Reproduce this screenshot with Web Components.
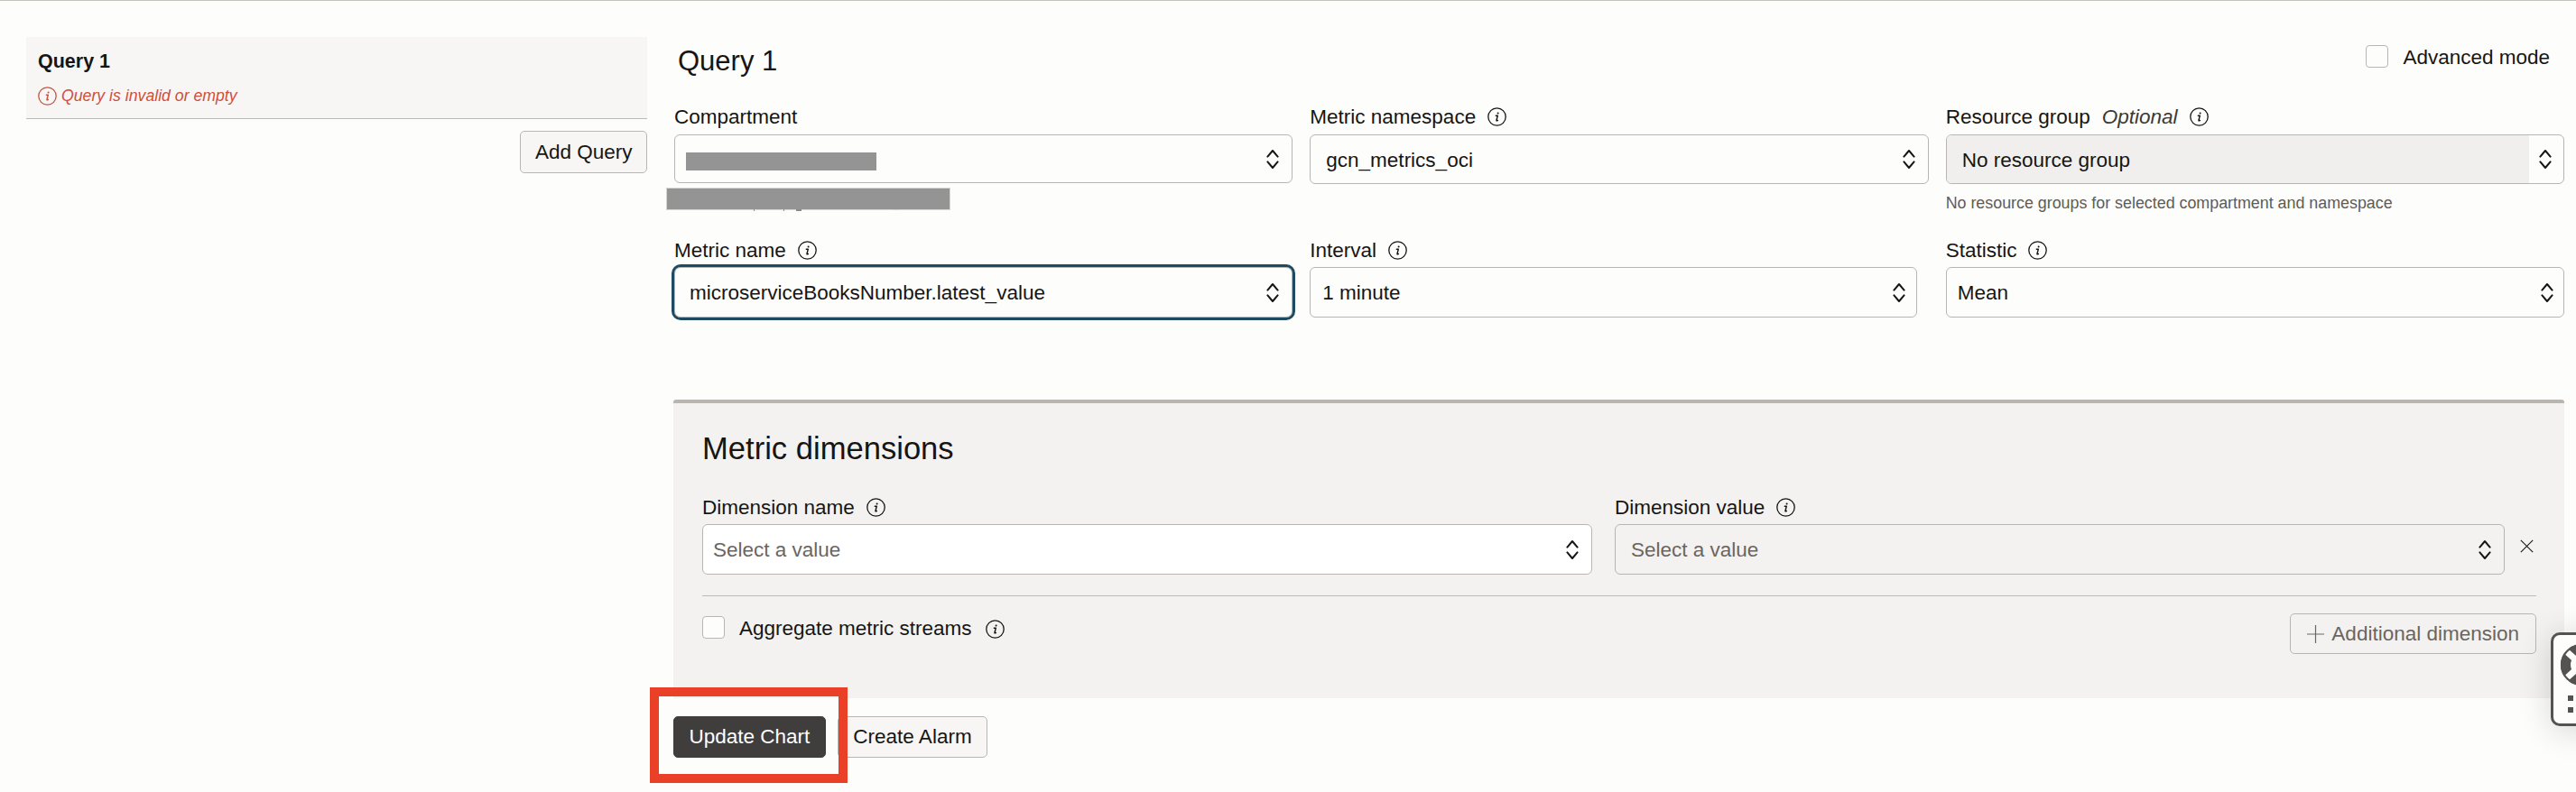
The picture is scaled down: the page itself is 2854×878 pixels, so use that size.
<!DOCTYPE html>
<html lang="en">
<head>
<meta charset="utf-8">
<title>Query 1</title>
<style>
  html, body { margin: 0; padding: 0; overflow: hidden; }
  body { background: #fdfdfb; color: #161513; font-family: "Liberation Sans", Arial, sans-serif; font-size: 22.5px; }
</style>
</head>
<body>
<oci-page>
  <query-sidebar slot="side"></query-sidebar>
  <query-editor slot="main"></query-editor>
</oci-page>

<script>
const INFO_ICON = `
  <svg width="21" height="21" viewBox="0 0 21 21" fill="none" stroke="currentColor" aria-hidden="true">
    <circle cx="10.5" cy="10.5" r="9.7" stroke-width="1.3"/>
    <path d="M9.3 9.3h2l-1.3 4.9c-.2.8.4 1 1.4.2" stroke-width="1.4" stroke-linecap="round" stroke-linejoin="round"/>
    <circle cx="11.6" cy="6.4" r="1" fill="currentColor" stroke="none"/>
  </svg>`;

class InfoIcon extends HTMLElement {
  connectedCallback() {
    this.attachShadow({ mode: 'open' });
    this.shadowRoot.innerHTML = `
      <style>
        :host { display: inline-flex; flex: none; width: 21px; height: 21px; }
      </style>
      ${INFO_ICON}
    `;
  }
}

class OciButton extends HTMLElement {
  connectedCallback() {
    this.attachShadow({ mode: 'open' });
    this.shadowRoot.innerHTML = `
      <style>
        :host {
          display: inline-flex;
          align-items: center;
          box-sizing: border-box;
          height: 47px;
          padding: 0 var(--btn-pad, 15.5px);
          border: 1px solid #b9b6b1;
          border-radius: 5px;
          background: #f7f6f5;
          color: #161513;
          white-space: nowrap;
        }
        :host([primary]) { background: #3f3e3c; border-color: #3f3e3c; color: #fff; }
        :host([disabled]) { background: transparent; color: #6b6560; padding: 0 18px; height: 45px; }
      </style>
      <slot></slot>
    `;
  }
}

class OciCheckbox extends HTMLElement {
  connectedCallback() {
    this.attachShadow({ mode: 'open' });
    this.shadowRoot.innerHTML = `
      <style>
        :host { display: inline-flex; align-items: flex-start; gap: 16px; line-height: 24px; white-space: nowrap; }
        .box {
          flex: none;
          box-sizing: border-box;
          width: 25px;
          height: 25px;
          border: 1px solid #b9b6b1;
          border-radius: 4px;
          background: #fdfdfb;
        }
        .tail { display: inline-flex; align-items: center; box-sizing: border-box; height: 26px; padding-top: 2px; gap: 15px; }
      </style>
      <span class="box"></span>
      <span class="tail"><slot></slot></span>
    `;
  }
}

class OciSelect extends HTMLElement {
  connectedCallback() {
    this.attachShadow({ mode: 'open' });
    this.shadowRoot.innerHTML = `
      <style>
        :host {
          display: flex;
          box-sizing: border-box;
          height: var(--h, 56px);
          border: 1px solid #b9b6b1;
          border-radius: 6px;
          background: var(--bg, #fdfdfb);
          overflow: visible;
        }
        :host([focused]) { outline: 3.5px solid #1e4a62; outline-offset: 0; border-radius: 7px; }
        .value {
          flex: 1;
          display: flex;
          align-items: center;
          box-sizing: border-box;
          padding: 2px 0 0 var(--pad, 16px);
          background: var(--value-bg, transparent);
          border-radius: 5px 0 0 5px;
          white-space: nowrap;
          color: var(--text, #161513);
        }
        .caret {
          flex: none;
          display: flex;
          align-items: center;
          justify-content: flex-end;
          width: var(--caret-w, 38px);
          padding-right: var(--caret, 14px);
          box-sizing: border-box;
        }
      </style>
      <span class="value"><slot></slot></span>
      <span class="caret">
        <svg width="14" height="23" viewBox="0 0 14 23" fill="none" stroke="#161513" stroke-width="2" stroke-linecap="round" stroke-linejoin="round">
          <path d="M1.4 8.6 7 2l5.6 6.6"/>
          <path d="M1.4 14.4 7 21l5.6-6.6"/>
        </svg>
      </span>
    `;
  }
}

class OciField extends HTMLElement {
  connectedCallback() {
    const info = this.hasAttribute('info') ? '<info-icon></info-icon>' : '';
    const optional = this.hasAttribute('optional') ? '<em>Optional</em>' : '';
    this.attachShadow({ mode: 'open' });
    this.shadowRoot.innerHTML = `
      <style>
        :host { display: block; min-width: 0; position: relative; }
        .label {
          display: flex;
          align-items: center;
          gap: 13px;
          height: 26px;
          margin-bottom: var(--label-gap, 7px);
          white-space: nowrap;
        }
        .label span, em { padding-top: 2px; line-height: 24px; }
        em { font-style: italic; color: #3a3936; }
        ::slotted([slot=help]) { display: block; margin-top: 10px; font-size: 17.85px; line-height: 22px; color: #5f5b57; }
      </style>
      <div class="label"><span>${this.getAttribute('label')}</span>${optional}${info}</div>
      <slot></slot>
      <slot name="help"></slot>
    `;
  }
}

class RedactionBar extends HTMLElement {
  connectedCallback() {
    this.attachShadow({ mode: 'open' });
    this.shadowRoot.innerHTML = `
      <style>
        :host { display: block; width: 211px; height: 20px; margin-top: 4px; background: #949494; }
        :host([over]) {
          position: absolute;
          left: -7px;
          top: 93px;
          width: 313px;
          height: 23px;
          margin-top: 0;
          box-shadow: 0 0 0 1px #d6d6d4;
        }
        svg { display: none; position: absolute; left: 0; top: 23px; }
        :host([over]) svg { display: block; }
      </style>
      <svg width="313" height="3" viewBox="0 0 313 3" fill="#8a8a88">
        <rect x="96" y="0" width="1" height="2"/>
        <rect x="129" y="0" width="1" height="2"/>
        <rect x="143" y="0" width="6" height="2"/>
        <rect x="250" y="0" width="8" height="1" fill="#cfcfcd"/>
      </svg>
    `;
  }
}

class QuerySidebar extends HTMLElement {
  connectedCallback() {
    this.attachShadow({ mode: 'open' });
    this.shadowRoot.innerHTML = `
      <style>
        :host { display: block; padding-top: 40px; }
        .item {
          box-sizing: border-box;
          height: 91px;
          padding: 14px 13px 0;
          background: #f7f6f5;
          border-bottom: 1px solid #bdbab5;
        }
        .name { font-weight: 700; font-size: 21.5px; line-height: 26px; }
        .error {
          display: flex;
          align-items: center;
          gap: 5px;
          margin-top: 14px;
          height: 22px;
          font-size: 17.7px;
          font-style: italic;
          color: #cf4f3b;
          white-space: nowrap;
        }
        .actions { display: flex; justify-content: flex-end; margin-top: 13px; }
      </style>
      <div class="item">
        <div class="name">Query 1</div>
        <div class="error"><info-icon></info-icon><span>Query is invalid or empty</span></div>
      </div>
      <div class="actions"><oci-button>Add Query</oci-button></div>
    `;
  }
}

class DimensionPanel extends HTMLElement {
  connectedCallback() {
    this.attachShadow({ mode: 'open' });
    this.shadowRoot.innerHTML = `
      <style>
        :host {
          display: block;
          --label-gap: 6px;
          box-sizing: border-box;
          padding: 30px 31px 49px 32px;
          background: #f3f2f1;
          border-top: 4px solid #b9b6af;
          border-radius: 3px 3px 0 0;
        }
        h3 { margin: 0 0 32px; font-weight: 400; font-size: 34.6px; line-height: 40px; }
        .row { display: flex; gap: 25px; }
        .row oci-field { flex: 1; }
        .remove { flex: none; width: 35px; margin-left: -25px; padding: 49px 0 0 17px; box-sizing: border-box; }
        .remove svg { display: block; }
        hr { margin: 23px 0 19px; border: 0; border-top: 1px solid #bdbab5; }
        .foot { display: flex; justify-content: space-between; align-items: flex-start; }
        .foot oci-checkbox { margin-top: 3px; }
        .plus { display: inline-flex; align-items: center; gap: 8px; }
      </style>
      <h3>Metric dimensions</h3>
      <div class="row">
        <oci-field label="Dimension name" info>
          <oci-select style="--bg:#fff;--pad:11px;--text:#6b6560;--caret:14px">Select a value</oci-select>
        </oci-field>
        <oci-field label="Dimension value" info>
          <oci-select style="--bg:transparent;--pad:17px;--text:#6b6560;--caret:14px">Select a value</oci-select>
        </oci-field>
        <div class="remove">
          <svg width="15" height="15" viewBox="0 0 15 15" fill="none" stroke="#161513" stroke-width="1.1"><path d="M.8.8l13.4 13.4M14.2.8.8 14.2"/></svg>
        </div>
      </div>
      <hr>
      <div class="foot">
        <oci-checkbox>Aggregate metric streams <info-icon></info-icon></oci-checkbox>
        <oci-button disabled>
          <span class="plus">
            <svg width="19" height="20" viewBox="0 0 19 20" fill="none" stroke="#6b6560" stroke-width="1.2"><path d="M9.5 0v20M0 10h19"/></svg>
            <span>Additional dimension</span>
          </span>
        </oci-button>
      </div>
    `;
  }
}

class QueryEditor extends HTMLElement {
  connectedCallback() {
    this.attachShadow({ mode: 'open' });
    this.shadowRoot.innerHTML = `
      <style>
        :host { display: block; padding-top: 49px; }
        .top { display: flex; justify-content: space-between; align-items: flex-start; padding: 0 16px 0 5px; }
        h2 { margin: 0; font-weight: 400; font-size: 31px; line-height: 36px; }
        .grid {
          display: grid;
          grid-template-columns: repeat(3, 1fr);
          column-gap: 19px;
          row-gap: 28px;
          margin-top: 30px;
          padding-left: 1px;
          position: relative;
        }
        .second { --label-gap: 6px; }
        dimension-panel { margin-top: 91px; }
        .actions { display: flex; gap: 13px; margin-top: 20px; --btn-pad: 16.5px; }
        .actions oci-button { height: 46px; }
      </style>
      <div class="top">
        <h2>Query 1</h2>
        <oci-checkbox>Advanced mode</oci-checkbox>
      </div>
      <div class="grid">
        <oci-field label="Compartment">
          <oci-select style="--pad:12px;--h:54px;--caret:14px"><redaction-bar></redaction-bar></oci-select>
        </oci-field>
        <oci-field label="Metric namespace" info>
          <oci-select style="--pad:17px;--h:55px;--caret:14px">gcn_metrics_oci</oci-select>
        </oci-field>
        <oci-field label="Resource group" optional info>
          <oci-select style="--pad:17px;--h:55px;--caret:13px;--value-bg:#f0efee">No resource group</oci-select>
          <span slot="help">No resource groups for selected compartment and namespace</span>
        </oci-field>

        <oci-field class="second" label="Metric name" info>
          <oci-select focused style="--pad:16px;--caret:14px">microserviceBooksNumber.latest_value</oci-select>
        </oci-field>
        <oci-field class="second" label="Interval" info style="margin-right:13px">
          <oci-select style="--pad:13px;--caret:12px">1 minute</oci-select>
        </oci-field>
        <oci-field class="second" label="Statistic" info>
          <oci-select style="--pad:12px;--caret:11px">Mean</oci-select>
        </oci-field>
        <redaction-bar over></redaction-bar>
      </div>
      <dimension-panel></dimension-panel>
      <div class="actions">
        <oci-button primary>Update Chart</oci-button>
        <oci-button>Create Alarm</oci-button>
      </div>
    `;
  }
}

class HelpTab extends HTMLElement {
  connectedCallback() {
    this.attachShadow({ mode: 'open' });
    this.shadowRoot.innerHTML = `
      <style>
        :host {
          position: absolute;
          left: 2826px;
          top: 700px;
          box-sizing: border-box;
          width: 70px;
          height: 104px;
          border: 3.5px solid #555350;
          border-radius: 10px;
          background: #fdfdfb;
          box-shadow: 0 4px 36px rgba(0, 0, 0, .16);
        }
        svg { position: absolute; left: 7.5px; top: 9.5px; }
      </style>
      <svg width="60" height="80" viewBox="0 0 60 80">
        <circle cx="23" cy="23" r="17.5" fill="none" stroke="#555350" stroke-width="11"/>
        <path d="M4 6 15 16M42 6 31 16M4 40l11-10M42 40 31 30" stroke="#fdfdfb" stroke-width="7"/>
        <circle cx="23" cy="23" r="22" fill="none" stroke="#555350" stroke-width="2.2"/>
        <rect x="8" y="57" width="6" height="6" fill="#555350"/>
        <rect x="8" y="70" width="6" height="6" fill="#555350"/>
      </svg>
    `;
  }
}

class RedMarker extends HTMLElement {
  connectedCallback() {
    this.attachShadow({ mode: 'open' });
    this.shadowRoot.innerHTML = `
      <style>
        :host {
          position: absolute;
          left: 720px;
          top: 761px;
          box-sizing: border-box;
          width: 219px;
          height: 106px;
          border: 10px solid #ea4027;
          pointer-events: none;
        }
      </style>
    `;
  }
}

class OciPage extends HTMLElement {
  connectedCallback() {
    this.attachShadow({ mode: 'open' });
    this.shadowRoot.innerHTML = `
      <style>
        :host {
          display: grid;
          grid-template-columns: 688px 2095px;
          column-gap: 29px;
          box-sizing: border-box;
          position: relative;
          height: 878px;
          padding-left: 29px;
          border-top: 1px solid #c6c3bc;
          overflow: hidden;
        }
      </style>
      <slot name="side"></slot>
      <slot name="main"></slot>
      <help-tab></help-tab>
      <red-marker></red-marker>
    `;
  }
}

customElements.define('info-icon', InfoIcon);
customElements.define('oci-button', OciButton);
customElements.define('oci-checkbox', OciCheckbox);
customElements.define('oci-select', OciSelect);
customElements.define('oci-field', OciField);
customElements.define('redaction-bar', RedactionBar);
customElements.define('query-sidebar', QuerySidebar);
customElements.define('dimension-panel', DimensionPanel);
customElements.define('query-editor', QueryEditor);
customElements.define('help-tab', HelpTab);
customElements.define('red-marker', RedMarker);
customElements.define('oci-page', OciPage);
</script>
</body>
</html>
